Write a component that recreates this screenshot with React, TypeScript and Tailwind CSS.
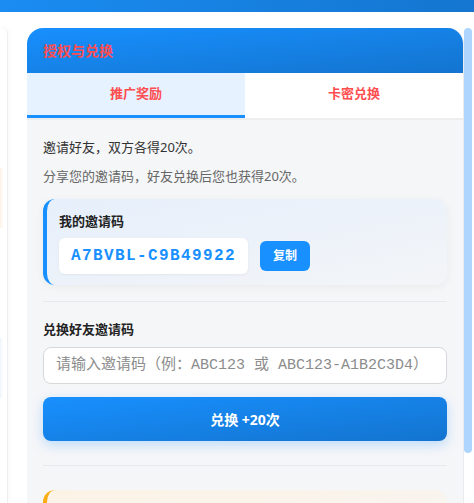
import React, { useState } from 'react';

const App: React.FC = () => {
    const [tab, setTab] = useState<'promo' | 'card'>('promo');
    const [code, setCode] = useState<string>('');

    return (
        <div className="relative h-[503px] w-[474px] overflow-hidden bg-white" style={{ fontFamily: '"Noto Sans", "Noto Sans CJK SC", sans-serif' }}>
            {/* top bar */}
            <div className="h-[12px] w-full bg-gradient-to-r from-[#1a8cf2] to-[#1476d0]" />

            <div className="flex h-[491px] pt-[16px]">
                {/* sidebar peeking in from the left */}
                <div className="relative h-full w-[8px] shrink-0 rounded-tr-[6px] border-r border-[#eceef1] bg-white shadow-[0_0_6px_rgba(0,0,0,0.04)]">
                    <div className="absolute left-0 top-[140px] h-[60px] w-[3px] bg-gradient-to-r from-[#fdf1e3] to-transparent" />
                    <div className="absolute left-0 top-[310px] h-[60px] w-[3px] bg-gradient-to-r from-[#eef4fd] to-transparent" />
                </div>

                {/* panel */}
                <div className="ml-[19px] flex h-full w-[437px] shrink-0 flex-col overflow-hidden rounded-t-[16px] border-r border-[#e9ebee] bg-[#f5f6f8]">
                    <div className="flex h-[45px] shrink-0 items-center bg-gradient-to-br from-[#1890ff] to-[#1374cf] px-4">
                        <h2 className="text-[14px] font-bold text-[#ff4d4f]">授权与兑换</h2>
                    </div>

                    <div className="flex h-[47px] shrink-0 border-b-2 border-[#eeeeee] bg-white shadow-[0_-4px_8px_rgba(24,144,255,0.12)_inset]">
                        <button
                            onClick={() => setTab('promo')}
                            className={`flex-1 border-b-[3px] text-[13px] font-bold text-[#ff4d4f] ${tab === 'promo' ? 'border-[#1890ff] bg-[#e6f2ff]' : 'border-transparent bg-white'}`}
                        >
                            推广奖励
                        </button>
                        <button
                            onClick={() => setTab('card')}
                            className={`flex-1 border-b-[3px] text-[13px] font-bold text-[#ff4d4f] ${tab === 'card' ? 'border-[#1890ff] bg-[#e6f2ff]' : 'border-transparent bg-white'}`}
                        >
                            卡密兑换
                        </button>
                    </div>

                    <div className="flex-1 px-4 pt-[17px]">
                        <p className="text-[13px] leading-[20px] text-[#333333]">邀请好友，双方各得20次。</p>
                        <p className="mt-[9px] text-[13px] leading-[20px] text-[#666666]">分享您的邀请码，好友兑换后您也获得20次。</p>

                        <div className="mt-[13px] rounded-[12px] border-l-4 border-[#1890ff] bg-gradient-to-br from-[#e6effb] to-[#f3f5f8] px-3 pb-[11px] pt-[12px] shadow-[0_2px_10px_rgba(0,0,0,0.05)]">
                            <div className="text-[13px] font-bold leading-[20px] text-[#222222]">我的邀请码</div>
                            <div className="mt-[7px] flex items-center gap-3">
                                <div className="flex h-[36px] w-[189px] items-center justify-center rounded-[6px] bg-white shadow-[0_1px_3px_rgba(0,0,0,0.05)]">
                                    <span className="text-[16px] font-bold tracking-[1.4px] text-[#1890ff]" style={{ fontFamily: '"Liberation Mono", monospace' }}>A7BVBL-C9B49922</span>
                                </div>
                                <button className="h-[30px] w-[50px] rounded-[6px] bg-[#1890ff] text-[12px] font-bold text-white">复制</button>
                            </div>
                        </div>

                        <div className="mt-[16px] h-px bg-[#e8e9ec]" />

                        <div className="mt-[17px] text-[13px] font-bold leading-[20px] text-[#222222]">兑换好友邀请码</div>
                        <input
                            value={code}
                            onChange={(e) => setCode(e.target.value)}
                            placeholder="请输入邀请码（例：ABC123 或 ABC123-A1B2C3D4）"
                            className="mt-[8px] h-[37px] w-full rounded-[8px] border border-[#d6d8dc] bg-white px-3 text-[15px] text-[#333333] placeholder:text-[#8c8c8c] focus:outline-none"
                            style={{ fontFamily: '"Liberation Mono", "Noto Sans CJK SC", monospace' }}
                        />
                        <button className="mt-[13px] h-[44px] w-full rounded-[8px] bg-gradient-to-br from-[#1890ff] to-[#1374cf] text-[14px] font-bold text-white shadow-[0_4px_12px_rgba(24,144,255,0.25)]">
                            兑换 +20次
                        </button>

                        <div className="mt-[24px] h-px bg-[#e8e9ec]" />

                        <div className="mt-[24px] h-[60px] rounded-[12px] border-l-4 border-[#faad14] bg-gradient-to-br from-[#fcf3e6] to-[#f6f5f4]" />
                    </div>
                </div>
            </div>

            {/* scrollbar */}
            <div className="absolute left-[464px] top-[28px] h-[425px] w-[8px] rounded-full bg-[#aed5fd]" />
        </div>
    );
};

export default App;
